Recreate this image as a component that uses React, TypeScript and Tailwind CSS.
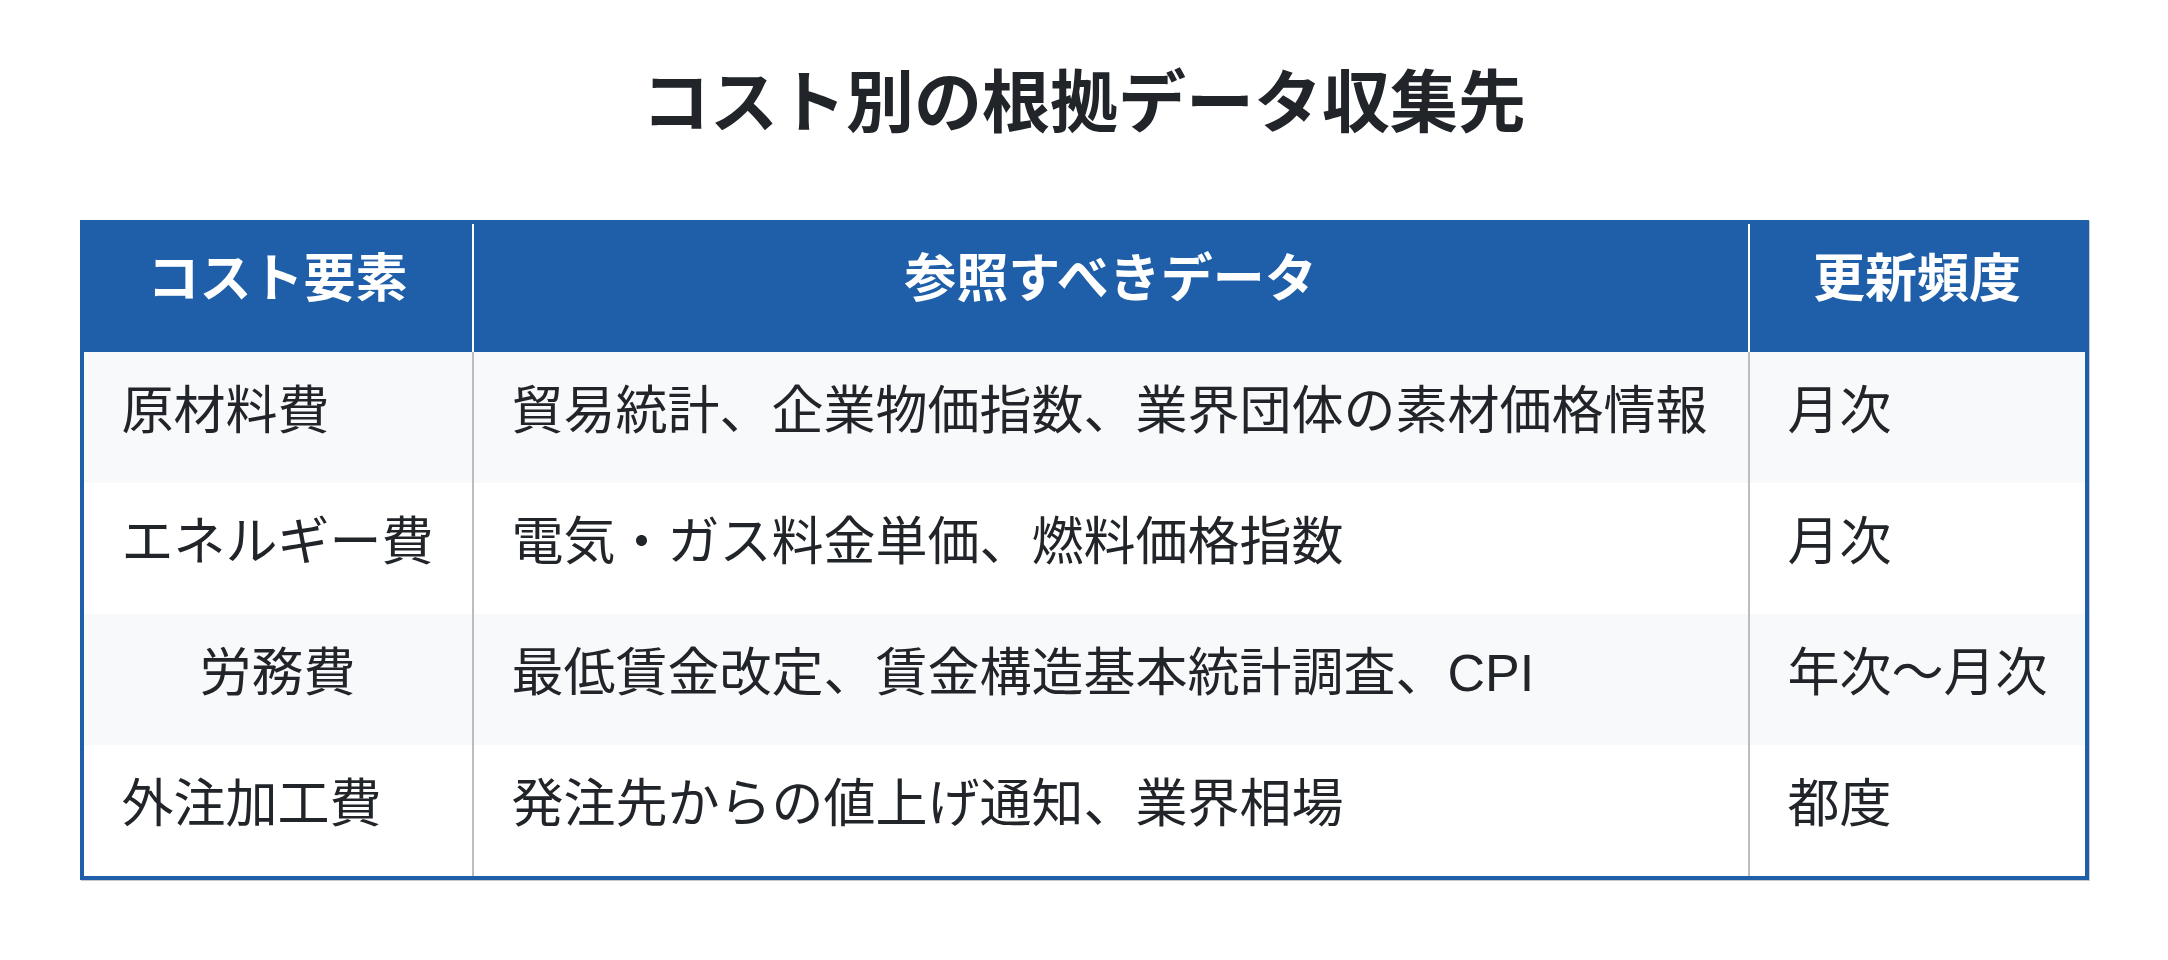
const rows = [
  { item: "原材料費", data: "貿易統計、企業物価指数、業界団体の素材価格情報", freq: "月次" },
  { item: "エネルギー費", data: "電気・ガス料金単価、燃料価格指数", freq: "月次" },
  { item: "労務費", data: "最低賃金改定、賃金構造基本統計調査、CPI", freq: "年次〜月次", center: true },
  { item: "外注加工費", data: "発注先からの値上げ通知、業界相場", freq: "都度" },
];

const App = () => (
  <div
    className="w-[2168px] h-[960px] bg-white text-[#212529] pt-[62px]"
    style={{ fontFamily: '"Liberation Sans", "Noto Sans CJK JP", sans-serif' }}
  >
    <h1 className="text-center text-[68px] leading-[82px] font-bold mb-[76px]">
      コスト別の根拠データ収集先
    </h1>
    <div className="mx-auto w-[2009px] border-4 border-[#1f5ea8] shadow-[1px_1px_0_#c8c8c8]">
      <div className="grid grid-cols-[388px_1276px_1fr] bg-[#1f5ea8] text-white font-bold text-[52px] leading-[78px]">
        <div className="text-center pt-[16px] pb-[34px]">コスト要素</div>
        <div className="text-center pt-[16px] pb-[34px] border-l-2 border-white">参照すべきデータ</div>
        <div className="text-center pt-[16px] pb-[34px] border-l-2 border-white">更新頻度</div>
      </div>
      {rows.map((r, i) => (
        <div
          key={i}
          className={
            "grid grid-cols-[388px_1276px_1fr] text-[52px] leading-[78px] " +
            (i % 2 === 0 ? "bg-[#f8f9fb]" : "bg-white")
          }
        >
          <div className={"px-[38px] pt-[20px] pb-[33px] whitespace-nowrap " + (r.center ? "text-center" : "")}>
            {r.item}
          </div>
          <div className="px-[38px] pt-[20px] pb-[33px] border-l-2 border-[#bdbdbd] whitespace-nowrap">{r.data}</div>
          <div className="pl-[38px] pt-[20px] pb-[33px] border-l-2 border-[#bdbdbd] whitespace-nowrap">{r.freq}</div>
        </div>
      ))}
    </div>
  </div>
);

export default App;
